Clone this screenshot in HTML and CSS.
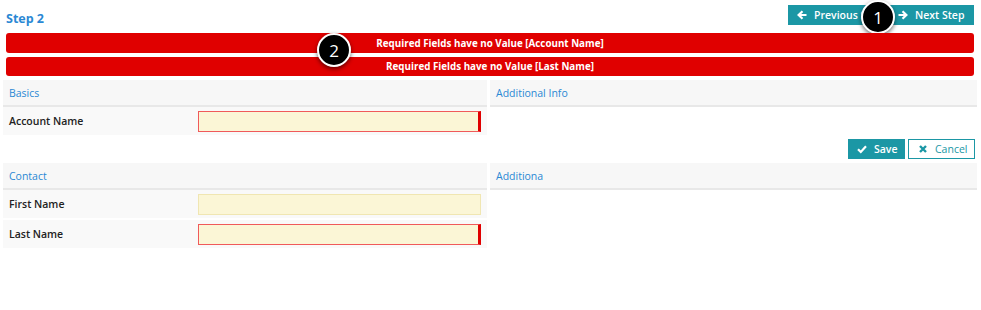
FILE: index.html
```html
<!DOCTYPE html>
<html>
<head>
<meta charset="utf-8">
<link rel="stylesheet" href="styles.css">
</head>
<body>
<div class="page">
  <div class="topbar">
    <div class="title">Step 2</div>
    <div class="btngroup">
      <button class="btn teal prev"><svg class="ico" viewBox="0 0 10 10"><path d="M9.5 5H2M5.5 1.2L1.6 5L5.5 8.8" fill="none" stroke="#fff" stroke-width="2.2"/></svg>Previous Step</button>
      <button class="btn teal next"><svg class="ico" viewBox="0 0 10 10"><path d="M0.5 5H8M4.5 1.2L8.4 5L4.5 8.8" fill="none" stroke="#fff" stroke-width="2.2"/></svg>Next Step</button>
    </div>
    <div class="badge b1">1</div>
  </div>
  <div class="alerts">
    <div class="alert">Required Fields have no Value [Account Name]</div>
    <div class="alert a2">Required Fields have no Value [Last Name]</div>
    <div class="badge b2">2</div>
  </div>
  <div class="grid">
    <div class="panel">
      <div class="phead">Basics</div>
      <div class="row"><div class="label">Account Name</div><div class="field"><div class="input err"></div></div></div>
    </div>
    <div class="panel">
      <div class="phead">Additional Info</div>
    </div>
  </div>
  <div class="actions">
    <button class="btn teal save"><svg class="ico" viewBox="0 0 10 10"><path d="M1 5.2L3.8 8L9 2.2" fill="none" stroke="#fff" stroke-width="2.2"/></svg>Save</button>
    <button class="btn outline cancel"><svg class="ico" viewBox="0 0 10 10"><path d="M2 2L8 8M8 2L2 8" fill="none" stroke="#1b97a5" stroke-width="2.4"/></svg>Cancel</button>
  </div>
  <div class="grid">
    <div class="panel">
      <div class="phead">Contact</div>
      <div class="row"><div class="label">First Name</div><div class="field"><div class="input"></div></div></div>
      <div class="row"><div class="label">Last Name</div><div class="field"><div class="input err"></div></div></div>
    </div>
    <div class="panel">
      <div class="phead">Additiona</div>
    </div>
  </div>
</div>
</body>
</html>
```
FILE: styles.css
```css
* { box-sizing: border-box; }
body { margin: 0; background: #fff; font-family: "Open Sans", "DejaVu Sans", sans-serif; }
.page { width: 981px; height: 310px; position: relative; }
.topbar { position: relative; height: 33px; display: flex; justify-content: space-between; align-items: flex-start; padding: 5px 7px 0 6px; }
.title { color: #2a88d4; font-weight: 700; font-size: 12.5px; padding-top: 5px; }
.btngroup { display: flex; }
.btn { font-family: "Open Sans", "DejaVu Sans", sans-serif; font-size: 10.5px; font-weight: 600; height: 20px; display: flex; align-items: center; gap: 7px; border: 0; padding: 0 10px; cursor: pointer; white-space: nowrap; flex-shrink: 0; }
.teal { background: #1b97a5; color: #fff; }
.outline { background: #fff; color: #1b97a5; border: 1px solid #1b97a5; }
.ico { width: 10px; height: 10px; flex-shrink: 0; }
.prev { width: 97px; padding-left: 9px; }
.next { width: 89px; padding-left: 13px; }
.badge { position: absolute; width: 34px; height: 34px; border-radius: 50%; background: #000; border: 2px solid #fff; box-shadow: 0 2px 4px rgba(0,0,0,0.55); color: #fff; font-size: 17px; display: flex; align-items: center; justify-content: center; font-family: "Open Sans", "DejaVu Sans", sans-serif; }
.b1 { left: 861px; top: 0px; }
.b2 { left: 317px; top: 0px; }
.alerts { position: relative; padding: 0 7px 0 6px; display: flex; flex-direction: column; gap: 4px; }
.alert { background: #e00000; color: #fff; font-size: 9.8px; font-weight: 700; height: 20px; border-radius: 3px; display: flex; align-items: center; justify-content: center; }
.a2 { height: 19px; }
.grid { display: grid; grid-template-columns: 484px 487px; gap: 3px; padding-left: 3px; }
.alerts + .grid { margin-top: 4px; }
.phead { background: #f7f7f7; border-bottom: 2px solid #e8e8e8; height: 27px; color: #2a88d4; font-size: 10.5px; padding: 6px 6px 0; }
.row { background: #f9f9f9; height: 28px; display: flex; align-items: center; margin-bottom: 2px; }
.label { width: 195px; font-size: 10.5px; font-weight: 600; color: #222; padding-left: 6px; }
.field { flex: 1; padding-right: 6px; }
.input { height: 21px; background: #fbf6d6; border: 1px solid #f0e6b2; }
.input.err { border: 1px solid #f05a5a; border-right: 3px solid #e00000; }
.actions { display: flex; justify-content: flex-end; gap: 3px; padding: 2px 6px 0 0; height: 26px; }
.save { width: 57px; padding-left: 9px; }
.cancel { width: 67px; padding-left: 9px; font-weight: 400; }
```
